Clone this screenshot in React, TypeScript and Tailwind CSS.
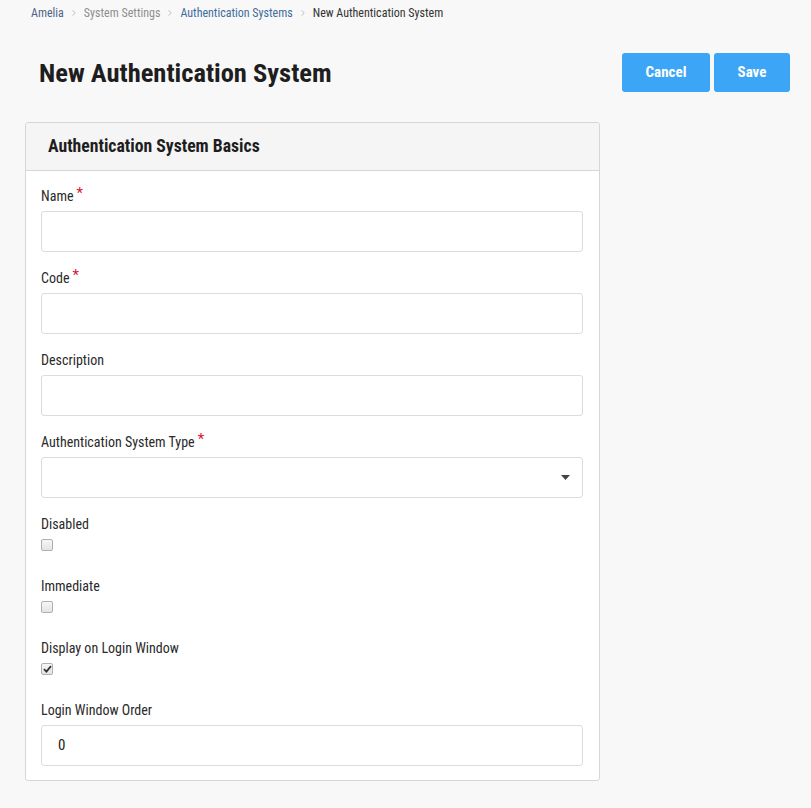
import { ChevronRight } from "lucide-react"

const font = { fontFamily: '"Roboto Condensed", Roboto, "Liberation Sans", sans-serif' }

function Label({ text, required }: { text: string; required?: boolean }) {
  return (
    <div className="flex h-5 items-center text-[14px] leading-5 text-[#2a2a2a]">
      {text}
      {required && <span className="ml-[3px] -mt-[6px] text-[15px] text-[#e0102f]">*</span>}
    </div>
  )
}

function TextField({ label, required, value }: { label: string; required?: boolean; value?: string }) {
  return (
    <div className="mb-4">
      <Label text={label} required={required} />
      <div className="mt-[5px] flex h-[41px] items-center rounded-[3px] border border-[#dcdcdc] bg-white pl-4 text-[15px] text-[#222]">
        {value}
      </div>
    </div>
  )
}

function CheckField({ label, checked }: { label: string; checked?: boolean }) {
  return (
    <div className="mb-[25px]">
      <Label text={label} />
      <div className="mt-[5px] flex h-3 w-3 items-center justify-center rounded-[2px] border border-[#b0b0b0] bg-gradient-to-b from-[#f6f6f6] to-[#e4e4e4]">
        {checked && (
          <svg width="9" height="8" viewBox="0 0 9 8">
            <path d="M1 4.2 L3.4 6.6 L8 1.2" fill="none" stroke="#333" strokeWidth="1.8" />
          </svg>
        )}
      </div>
    </div>
  )
}

export default function App() {
  const crumbs = ["Amelia", "System Settings", "Authentication Systems"]
  const crumbColors = ["text-[#4d6585]", "text-[#8e8e8e]", "text-[#3f6c9c]"]

  return (
    <div className="min-h-[808px] w-[811px] bg-[#f8f8f8]" style={font}>
      <div className="flex h-[26px] items-center pl-[31px] text-[12px]">
        {crumbs.map((c, i) => (
          <span key={c} className="flex items-center">
            <span className={crumbColors[i]}>{c}</span>
            <ChevronRight size={10} className="mx-[5px] text-[#b5b5b5]" strokeWidth={2} />
          </span>
        ))}
        <span className="text-[#333]">New Authentication System</span>
      </div>

      <div className="mt-[27px] flex h-[39px] items-center justify-between pl-[39px] pr-[21px]">
        <h1 className="text-[26.5px] font-bold text-[#1e1e1e]">New Authentication System</h1>
        <div className="flex gap-1">
          <button className="h-[39px] w-[88px] rounded-[3px] bg-[#3ca5f5] text-[15px] font-bold text-white">Cancel</button>
          <button className="h-[39px] w-[76px] rounded-[3px] bg-[#3ca5f5] text-[15px] font-bold text-white">Save</button>
        </div>
      </div>

      <div className="ml-[25px] mt-[30px] w-[575px] rounded-[3px] border border-[#d6d6d6] bg-white">
        <div className="flex h-[48px] items-center rounded-t-[3px] border-b border-[#d6d6d6] bg-[#f5f5f5] pl-[22px]">
          <h2 className="text-[17.7px] font-bold text-[#1e1e1e]">Authentication System Basics</h2>
        </div>
        <div className="pb-[14px] pl-[15px] pr-[16px] pt-[15px]">
          <TextField label="Name" required />
          <TextField label="Code" required />
          <TextField label="Description" />
          <div className="mb-4">
            <Label text="Authentication System Type" required />
            <div className="mt-[5px] flex h-[41px] items-center justify-end rounded-[3px] border border-[#dcdcdc] bg-white pr-[12px]">
              <svg width="9" height="5" viewBox="0 0 9 5">
                <path d="M0 0 H9 L4.5 5 Z" fill="#444" />
              </svg>
            </div>
          </div>
          <CheckField label="Disabled" />
          <CheckField label="Immediate" />
          <CheckField label="Display on Login Window" checked />
          <div>
            <Label text="Login Window Order" />
            <div className="mt-[5px] flex h-[41px] items-center rounded-[3px] border border-[#dcdcdc] bg-white pl-4 text-[15px] text-[#222]">
              0
            </div>
          </div>
        </div>
      </div>
    </div>
  )
}
